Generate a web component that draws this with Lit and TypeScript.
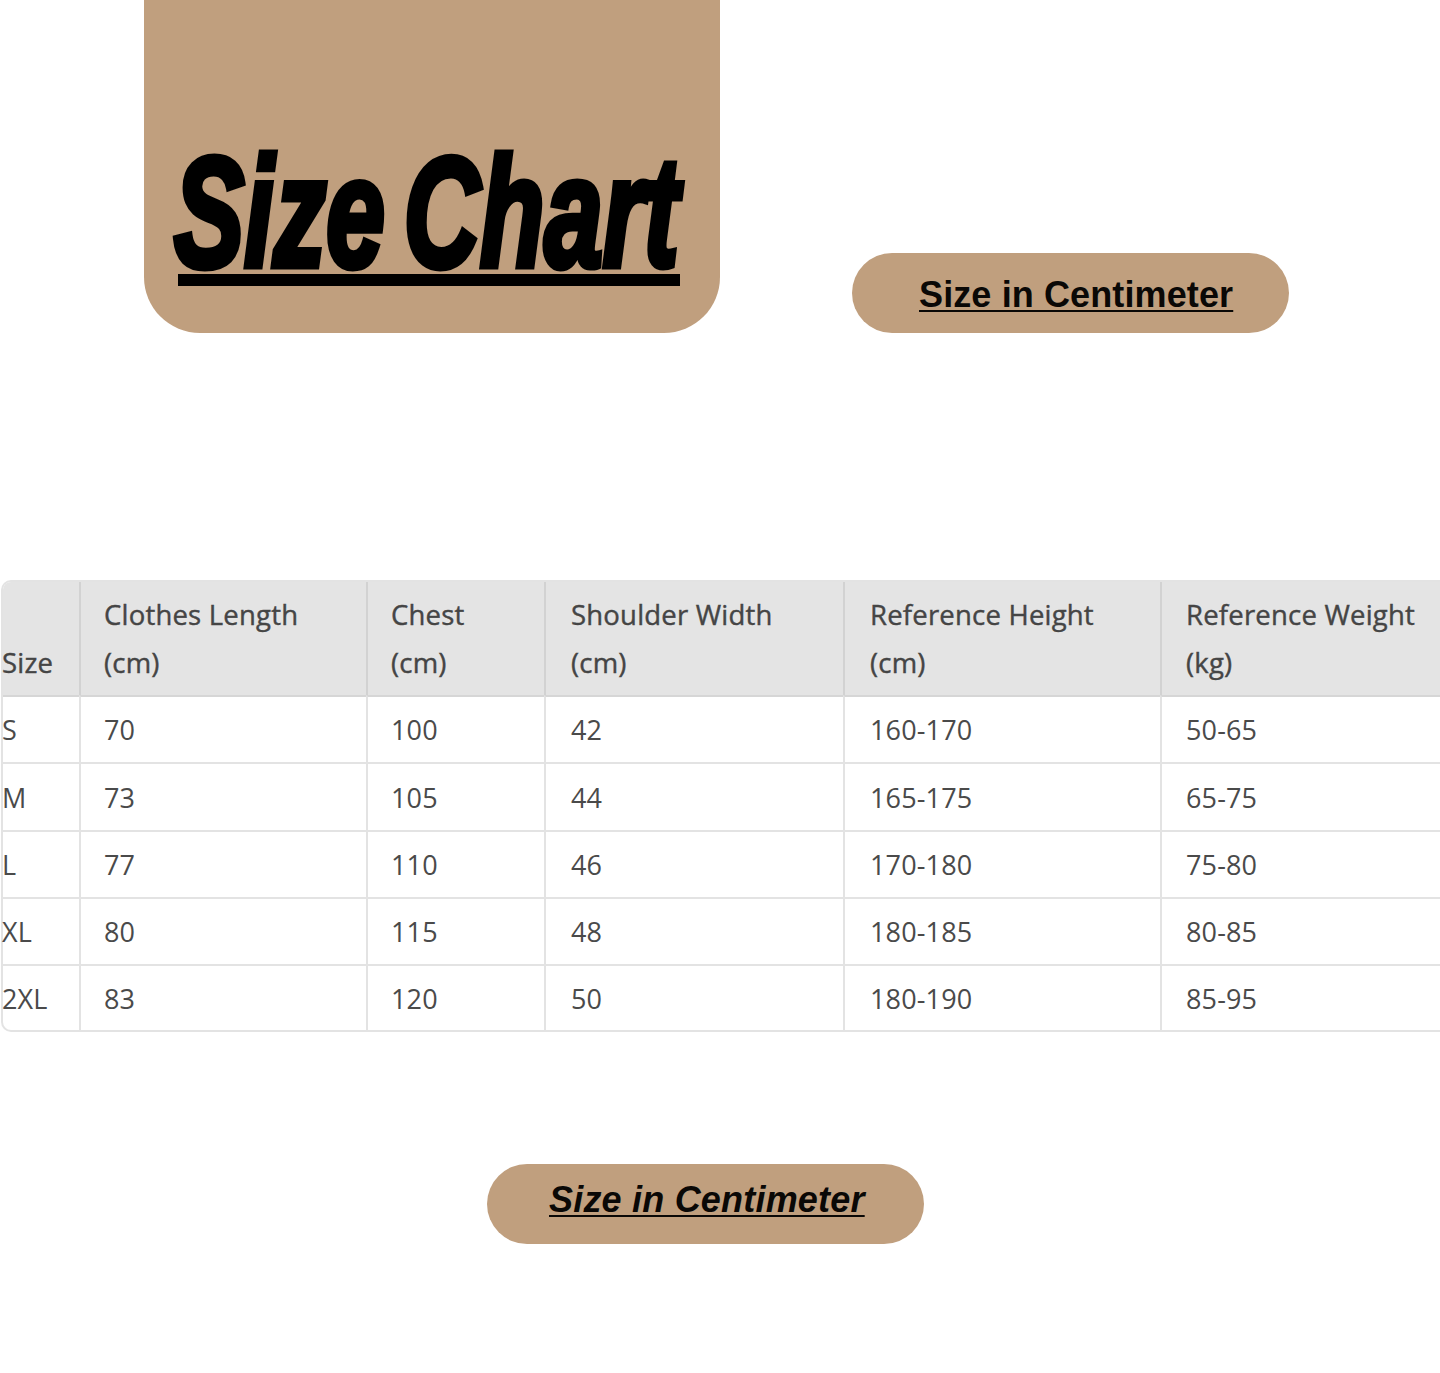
import { LitElement, html, css } from "lit";
import { customElement } from "lit/decorators.js";

const HEAD: [string, string][] = [
  ["", "Size"],
  ["Clothes Length", "(cm)"],
  ["Chest", "(cm)"],
  ["Shoulder Width", "(cm)"],
  ["Reference Height", "(cm)"],
  ["Reference Weight", "(kg)"],
];
const ROWS = [
  ["S", "70", "100", "42", "160-170", "50-65"],
  ["M", "73", "105", "44", "165-175", "65-75"],
  ["L", "77", "110", "46", "170-180", "75-80"],
  ["XL", "80", "115", "48", "180-185", "80-85"],
  ["2XL", "83", "120", "50", "180-190", "85-95"],
];
const HEIGHTS = [67, 68, 67, 67, 66];

@customElement("app-root")
export class AppRoot extends LitElement {
  static styles = css`
    :host {
      display: block;
      width: 1440px;
      height: 1373px;
      overflow: hidden;
      background: #fff;
      font-family: "Liberation Sans", Arial, sans-serif;
      color: #000;
    }
    .top {
      display: flex;
      align-items: flex-end;
      gap: 132px;
      padding-left: 144px;
    }
    .card {
      flex: none;
      box-sizing: border-box;
      width: 576px;
      height: 333px;
      padding: 124px 0 0 30px;
      background: #c09f7e;
      border-radius: 0 0 56px 56px;
    }
    .title {
      margin: 0;
      height: 150px;
      font-size: 156px;
      line-height: 176px;
      font-weight: 700;
      font-style: italic;
      white-space: nowrap;
      word-spacing: -15px;
      -webkit-text-stroke: 7px #000;
      transform: scaleX(0.675);
      transform-origin: left top;
    }
    .rule {
      width: 502px;
      height: 12px;
      margin-left: 4px;
      background: #000;
    }
    .pill {
      flex: none;
      box-sizing: border-box;
      width: 437px;
      height: 80px;
      display: flex;
      align-items: center;
      background: #c09f7e;
      border-radius: 40px;
      font-size: 36px;
      font-weight: 700;
      letter-spacing: 0.12px;
      text-decoration: underline;
      text-decoration-thickness: 2px;
      text-underline-offset: 3px;
      color: #0a0806;
      white-space: nowrap;
    }
    .pill.first {
      padding: 3px 0 0 67px;
    }
    .pill.second {
      padding: 0 0 9px 62px;
      margin: 132px 0 0 487px;
      font-style: italic;
      letter-spacing: 0.2px;
    }
    .wrap {
      margin: 247px 0 0 1px;
    }
    table {
      width: 1499px;
      table-layout: fixed;
      border-collapse: separate;
      border-spacing: 0;
      border: 2px solid #e3e3e3;
      border-right: 0;
      border-radius: 10px 0 0 10px;
      font-family: "Open Sans", "Noto Sans", sans-serif;
      font-size: 27px;
      letter-spacing: 0.15px;
      color: #4a4a4a;
    }
    th, td {
      box-sizing: border-box;
      padding: 0 0 0 23px;
      text-align: left;
      font-weight: 400;
      border-left: 2px solid #e3e3e3;
      border-top: 2px solid #e3e3e3;
      white-space: nowrap;
      vertical-align: middle;
    }
    th:nth-child(4), td:nth-child(4),
    th:nth-child(5), td:nth-child(5) {
      padding-left: 25px;
    }
    th:nth-child(6), td:nth-child(6) {
      padding-left: 24px;
    }
    th:first-child, td:first-child {
      border-left: 0;
      padding-left: 0;
      text-indent: -1px;
    }
    thead th {
      border-top: 0;
      height: 113px;
      background: #e4e4e4;
      font-size: 27.5px;
      letter-spacing: 0.2px;
      line-height: 48px;
      vertical-align: bottom;
      padding-bottom: 8px;
      color: #454545;
      border-left-color: #d2d2d2;
      -webkit-text-stroke: 0.4px #454545;
    }
    thead th:first-child {
      border-top-left-radius: 8px;
    }
    tbody tr:first-child td {
      border-top-color: #d6d6d6;
    }
  `;

  render() {
    return html`
      <div class="top">
        <div class="card">
          <h1 class="title">Size Chart</h1>
          <div class="rule"></div>
        </div>
        <div class="pill first">Size in Centimeter</div>
      </div>
      <div class="wrap">
        <table>
          <colgroup>
            <col style="width:76px" />
            <col style="width:287px" />
            <col style="width:178px" />
            <col style="width:299px" />
            <col style="width:317px" />
            <col style="width:340px" />
          </colgroup>
          <thead>
            <tr>
              ${HEAD.map(
                ([a, b]) => html`<th>${a}${a ? html`<br />` : ""}${b}</th>`
              )}
            </tr>
          </thead>
          <tbody>
            ${ROWS.map(
              (r, i) => html`<tr style="height:${HEIGHTS[i]}px">
                ${r.map((c) => html`<td>${c}</td>`)}
              </tr>`
            )}
          </tbody>
        </table>
      </div>
      <div class="pill second">Size in Centimeter</div>
    `;
  }
}
